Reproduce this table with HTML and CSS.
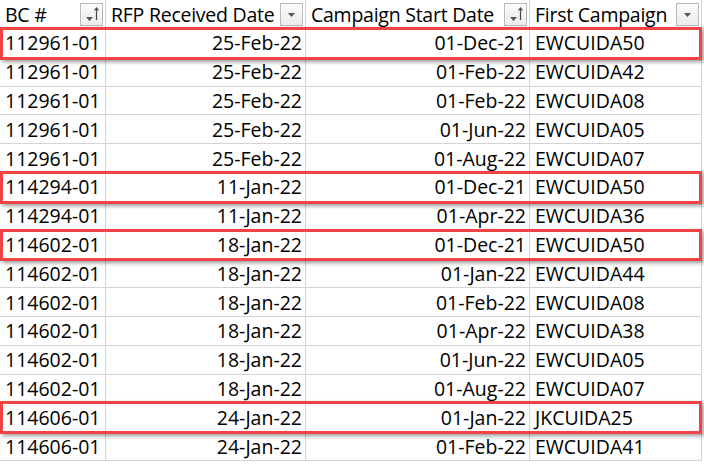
FILE: index.html
```html
<!DOCTYPE html>
<html>
<head>
<meta charset="utf-8">
<link rel="stylesheet" href="styles.css">
</head>
<body>
<div class="sheet">
  <div class="row head">
    <div class="cell left">BC #<span class="fbtn"><svg width="21" height="21" viewBox="0 0 21 21"><path d="M5 13h7l-3.5 4z" fill="#555"/><path d="M15.5 4v12M13.5 6.5l2-2.5 2 2.5" stroke="#444" stroke-width="1.2" fill="none"/></svg></span></div>
    <div class="cell left">RFP Received Date<span class="fbtn"><svg width="21" height="21" viewBox="0 0 21 21"><path d="M7 9h7l-3.5 4z" fill="#555"/></svg></span></div>
    <div class="cell left">Campaign Start Date<span class="fbtn"><svg width="21" height="21" viewBox="0 0 21 21"><path d="M5 13h7l-3.5 4z" fill="#555"/><path d="M15.5 4v12M13.5 6.5l2-2.5 2 2.5" stroke="#444" stroke-width="1.2" fill="none"/></svg></span></div>
    <div class="cell left">First Campaign<span class="fbtn"><svg width="21" height="21" viewBox="0 0 21 21"><path d="M7 9h7l-3.5 4z" fill="#555"/></svg></span></div>
  </div>
  <div class="row hl"><div class="cell left">112961-01</div><div class="cell right">25-Feb-22</div><div class="cell right">01-Dec-21</div><div class="cell left">EWCUIDA50</div></div>
  <div class="row"><div class="cell left">112961-01</div><div class="cell right">25-Feb-22</div><div class="cell right">01-Feb-22</div><div class="cell left">EWCUIDA42</div></div>
  <div class="row"><div class="cell left">112961-01</div><div class="cell right">25-Feb-22</div><div class="cell right">01-Feb-22</div><div class="cell left">EWCUIDA08</div></div>
  <div class="row"><div class="cell left">112961-01</div><div class="cell right">25-Feb-22</div><div class="cell right">01-Jun-22</div><div class="cell left">EWCUIDA05</div></div>
  <div class="row"><div class="cell left">112961-01</div><div class="cell right">25-Feb-22</div><div class="cell right">01-Aug-22</div><div class="cell left">EWCUIDA07</div></div>
  <div class="row hl"><div class="cell left">114294-01</div><div class="cell right">11-Jan-22</div><div class="cell right">01-Dec-21</div><div class="cell left">EWCUIDA50</div></div>
  <div class="row"><div class="cell left">114294-01</div><div class="cell right">11-Jan-22</div><div class="cell right">01-Apr-22</div><div class="cell left">EWCUIDA36</div></div>
  <div class="row hl"><div class="cell left">114602-01</div><div class="cell right">18-Jan-22</div><div class="cell right">01-Dec-21</div><div class="cell left">EWCUIDA50</div></div>
  <div class="row"><div class="cell left">114602-01</div><div class="cell right">18-Jan-22</div><div class="cell right">01-Jan-22</div><div class="cell left">EWCUIDA44</div></div>
  <div class="row"><div class="cell left">114602-01</div><div class="cell right">18-Jan-22</div><div class="cell right">01-Feb-22</div><div class="cell left">EWCUIDA08</div></div>
  <div class="row"><div class="cell left">114602-01</div><div class="cell right">18-Jan-22</div><div class="cell right">01-Apr-22</div><div class="cell left">EWCUIDA38</div></div>
  <div class="row"><div class="cell left">114602-01</div><div class="cell right">18-Jan-22</div><div class="cell right">01-Jun-22</div><div class="cell left">EWCUIDA05</div></div>
  <div class="row"><div class="cell left">114602-01</div><div class="cell right">18-Jan-22</div><div class="cell right">01-Aug-22</div><div class="cell left">EWCUIDA07</div></div>
  <div class="row hl"><div class="cell left">114606-01</div><div class="cell right">24-Jan-22</div><div class="cell right">01-Jan-22</div><div class="cell left">JKCUIDA25</div></div>
  <div class="row"><div class="cell left">114606-01</div><div class="cell right">24-Jan-22</div><div class="cell right">01-Feb-22</div><div class="cell left">EWCUIDA41</div></div>
</div>
</body>
</html>
```
FILE: styles.css
```css
html, body {
  margin: 0;
  padding: 0;
  background: #fff;
}
.sheet {
  width: 704px;
  height: 467px;
  overflow: hidden;
  font-family: "Open Sans", "Liberation Sans", sans-serif;
  font-size: 19.5px;
  color: #000;
}
.row {
  position: relative;
  display: grid;
  grid-template-columns: 106px 200px 224px 172px;
  height: 28.8px;
  box-sizing: border-box;
}
.row.head {
  height: 29px;
  letter-spacing: -0.25px;
}
.cell {
  display: flex;
  align-items: center;
  box-sizing: border-box;
  border-right: 1px solid #d4d4d4;
  border-bottom: 1px solid #d4d4d4;
  white-space: nowrap;
  overflow: hidden;
  position: relative;
}
.cell.left {
  padding-left: 5px;
}
.cell.right {
  justify-content: flex-end;
  padding-right: 3px;
}
.head .cell {
  padding-right: 2px;
  justify-content: space-between;
}
.fbtn {
  width: 21px;
  height: 21px;
  box-sizing: content-box;
  border: 1px solid #b9b9b9;
  background: linear-gradient(#fafafa, #ececec);
  display: flex;
}
.row.hl::after {
  content: "";
  position: absolute;
  left: 0;
  right: 2px;
  top: -2px;
  bottom: -2px;
  border: 3px solid #ef4346;
  box-shadow: 2px 2px 4px rgba(0, 0, 0, 0.4);
  z-index: 2;
  pointer-events: none;
}
```
